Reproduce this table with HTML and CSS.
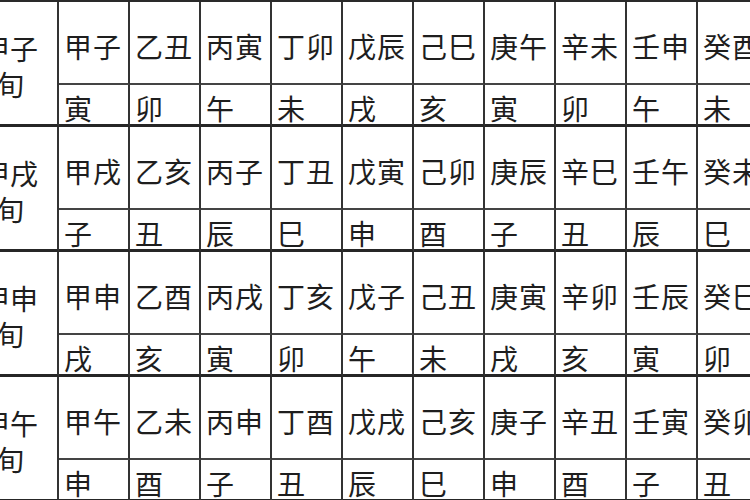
FILE: index.html
```html
<!DOCTYPE html>
<html lang="zh">
<head>
<meta charset="utf-8">
<title>六甲旬空表</title>
<link rel="stylesheet" href="styles.css">
</head>
<body>
<div class="sheet">
  <div class="head"><span class="line">甲子</span><span class="line">旬</span></div>
  <div class="cell gan">甲子</div><div class="cell gan">乙丑</div><div class="cell gan">丙寅</div><div class="cell gan">丁卯</div><div class="cell gan">戊辰</div><div class="cell gan">己巳</div><div class="cell gan">庚午</div><div class="cell gan">辛未</div><div class="cell gan">壬申</div><div class="cell gan">癸酉</div>
  <div class="cell zhi">寅</div><div class="cell zhi">卯</div><div class="cell zhi">午</div><div class="cell zhi">未</div><div class="cell zhi">戌</div><div class="cell zhi">亥</div><div class="cell zhi">寅</div><div class="cell zhi">卯</div><div class="cell zhi">午</div><div class="cell zhi">未</div>

  <div class="head"><span class="line">甲戌</span><span class="line">旬</span></div>
  <div class="cell gan">甲戌</div><div class="cell gan">乙亥</div><div class="cell gan">丙子</div><div class="cell gan">丁丑</div><div class="cell gan">戊寅</div><div class="cell gan">己卯</div><div class="cell gan">庚辰</div><div class="cell gan">辛巳</div><div class="cell gan">壬午</div><div class="cell gan">癸未</div>
  <div class="cell zhi">子</div><div class="cell zhi">丑</div><div class="cell zhi">辰</div><div class="cell zhi">巳</div><div class="cell zhi">申</div><div class="cell zhi">酉</div><div class="cell zhi">子</div><div class="cell zhi">丑</div><div class="cell zhi">辰</div><div class="cell zhi">巳</div>

  <div class="head"><span class="line">甲申</span><span class="line">旬</span></div>
  <div class="cell gan">甲申</div><div class="cell gan">乙酉</div><div class="cell gan">丙戌</div><div class="cell gan">丁亥</div><div class="cell gan">戊子</div><div class="cell gan">己丑</div><div class="cell gan">庚寅</div><div class="cell gan">辛卯</div><div class="cell gan">壬辰</div><div class="cell gan">癸巳</div>
  <div class="cell zhi">戌</div><div class="cell zhi">亥</div><div class="cell zhi">寅</div><div class="cell zhi">卯</div><div class="cell zhi">午</div><div class="cell zhi">未</div><div class="cell zhi">戌</div><div class="cell zhi">亥</div><div class="cell zhi">寅</div><div class="cell zhi">卯</div>

  <div class="head"><span class="line">甲午</span><span class="line">旬</span></div>
  <div class="cell gan">甲午</div><div class="cell gan">乙未</div><div class="cell gan">丙申</div><div class="cell gan">丁酉</div><div class="cell gan">戊戌</div><div class="cell gan">己亥</div><div class="cell gan">庚子</div><div class="cell gan">辛丑</div><div class="cell gan">壬寅</div><div class="cell gan">癸卯</div>
  <div class="cell zhi">申</div><div class="cell zhi">酉</div><div class="cell zhi">子</div><div class="cell zhi">丑</div><div class="cell zhi">辰</div><div class="cell zhi">巳</div><div class="cell zhi">申</div><div class="cell zhi">酉</div><div class="cell zhi">子</div><div class="cell zhi">丑</div>
</div>
</body>
</html>
```

FILE: styles.css
```css
html, body {
  margin: 0;
  padding: 0;
  background: #ffffff;
  overflow: hidden;
}

body {
  width: 750px;
  height: 500px;
  font-family: "Noto Sans CJK SC", "Noto Sans CJK JP", sans-serif;
  color: #1e1e1e;
}

.sheet {
  display: grid;
  grid-template-columns: 96px repeat(10, 71px);
  grid-template-rows: repeat(4, 83px 42px);
  grid-auto-flow: row dense;
  width: max-content;
  margin-left: -37px;
  border-top: 2px solid #2a2a2a;
}

.head,
.cell {
  box-sizing: border-box;
  border-right: 2px solid #333333;
  display: flex;
  align-items: center;
  padding-top: 6px;
  font-size: 28px;
  font-weight: 400;
  white-space: nowrap;
  overflow: hidden;
}

.head {
  grid-column: 1;
  grid-row: span 2;
  flex-direction: column;
  justify-content: center;
  gap: 8px;
  border-bottom: 3px solid #262626;
}

.line {
  display: block;
  line-height: 28px;
  height: 28px;
}

.cell {
  padding-left: 5px;
  letter-spacing: 1px;
  line-height: 1;
}

.gan {
  border-bottom: 2px solid #444444;
}

.zhi {
  border-bottom: 3px solid #262626;
}
```
